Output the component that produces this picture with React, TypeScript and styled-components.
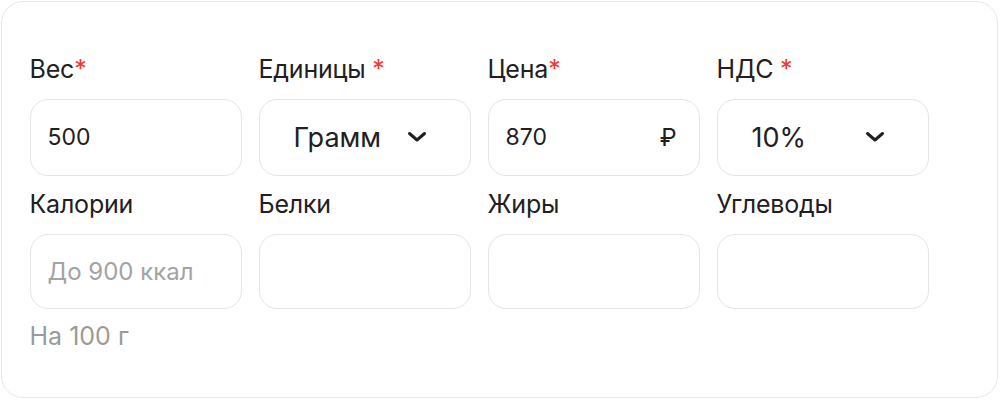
import styled, { createGlobalStyle } from "styled-components"

const Global = createGlobalStyle`
body {
  margin: 0;
  background: #ffffff;
  font-family: Inter, "Noto Sans", sans-serif;
  color: #21201f;
}
`

const Chevron = () => (
  <svg width="22" height="12" viewBox="0 0 22 12" fill="none">
    <path d="M3.5 2.5L11 9L18.5 2.5" stroke="#21201f" strokeWidth="3" strokeLinecap="round" strokeLinejoin="round" />
  </svg>
)

const App = () => {
  return (
    <Page>
      <Global />
      <Card>
        <Grid>
          <Field>
            <Label>Вес<Star>*</Star></Label>
            <Box><Value>500</Value></Box>
          </Field>
          <Field>
            <Label>Единицы <Star>*</Star></Label>
            <Box select>
              <SelectValue>Грамм</SelectValue>
              <Chevron />
            </Box>
          </Field>
          <Field>
            <Label>Цена<Star>*</Star></Label>
            <Box>
              <Value>870</Value>
              <Suffix>₽</Suffix>
            </Box>
          </Field>
          <Field>
            <Label>НДС <Star>*</Star></Label>
            <Box select>
              <SelectValue>10%</SelectValue>
              <Chevron />
            </Box>
          </Field>

          <Field>
            <Label>Калории</Label>
            <Box small><Placeholder>До 900 ккал</Placeholder></Box>
            <Hint>На 100 г</Hint>
          </Field>
          <Field>
            <Label>Белки</Label>
            <Box small />
          </Field>
          <Field>
            <Label>Жиры</Label>
            <Box small />
          </Field>
          <Field>
            <Label>Углеводы</Label>
            <Box small />
          </Field>
        </Grid>
      </Card>
    </Page>
  )
}

export default App

const Page = styled.div`
width: 1000px;
height: 400px;
padding: 1px 2px 2px 1px;
box-sizing: border-box;
`
const Card = styled.div`
height: 100%;
box-sizing: border-box;
border: 1.5px solid #e8e8e8;
border-radius: 22px;
background: #fff;
padding: 51.5px 27.5px 0;
`
const Grid = styled.div`
display: grid;
grid-template-columns: repeat(4, 212px);
column-gap: 17px;
row-gap: 13px;
align-items: start;
`
const Field = styled.div`
display: flex;
flex-direction: column;
`
const Label = styled.div`
font-size: 25px;
line-height: 30px;
height: 30px;
margin-bottom: 15px;
letter-spacing: -0.2px;
white-space: nowrap;
color: #21201f;
`
const Star = styled.span`
color: #f5362a;
`
const Box = styled.div<{ select?: boolean; small?: boolean }>`
height: ${p => (p.small ? "75px" : "77px")};
box-sizing: border-box;
border: 1.5px solid #e5e5e5;
border-radius: 18px;
display: flex;
align-items: center;
justify-content: space-between;
padding: ${p => (p.select ? "0 42px 0 34px" : "0 22px 0 17px")};
`
const Value = styled.span`
font-size: 23px;
color: #21201f;
`
const SelectValue = styled.span`
font-size: 27px;
color: #21201f;
`
const Suffix = styled.span`
font-size: 24px;
color: #21201f;
`
const Placeholder = styled.span`
font-size: 24px;
color: #a3a3a3;
`
const Hint = styled.div`
margin-top: 12px;
font-size: 25px;
line-height: 30px;
color: #9a9a9a;
`
